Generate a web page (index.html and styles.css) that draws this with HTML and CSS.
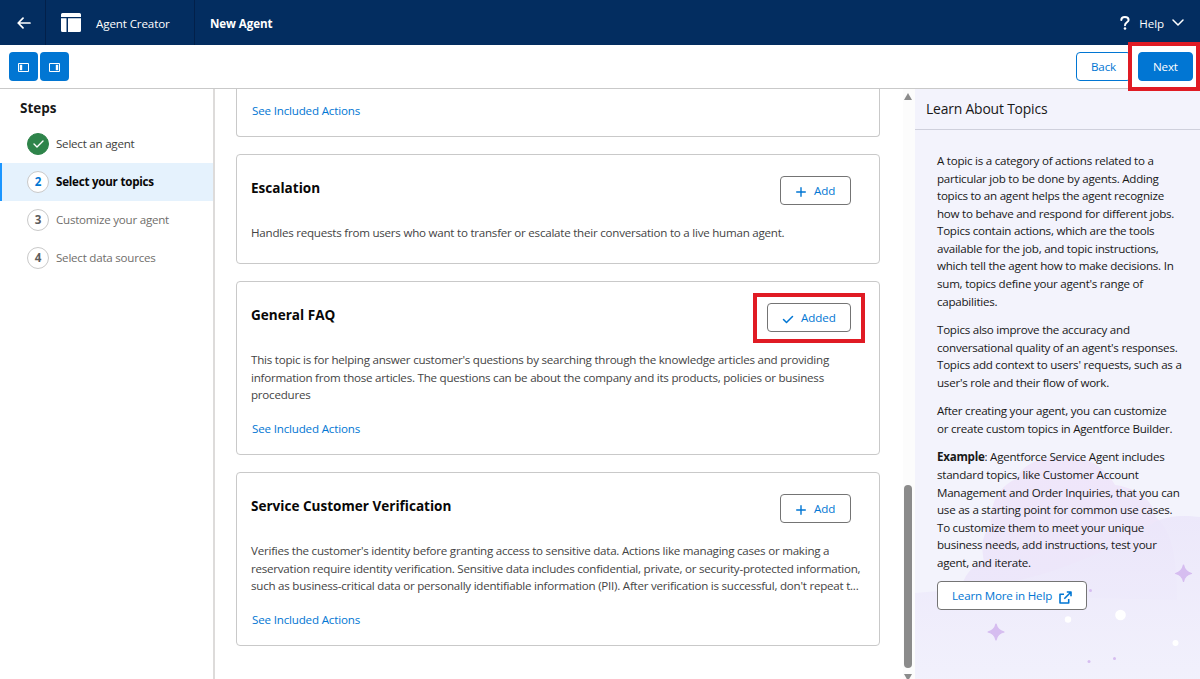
FILE: index.html
```html
<!DOCTYPE html>
<html lang="en">
<head>
    <meta charset="UTF-8">
    <meta name="viewport" content="width=device-width, initial-scale=1.0">
    <title>Agent Creator - New Agent</title>
    <link rel="stylesheet" href="styles.css">
</head>
<body>
    <header class="topbar">
        <a href="#" class="back-arrow">
            <svg width="14" height="12" viewBox="0 0 14 12" fill="none" stroke="#fff" stroke-width="1.7" stroke-linecap="round" stroke-linejoin="round"><path d="M13 6H1.2M6 1.2L1.2 6L6 10.8"/></svg>
        </a>
        <div class="app">
            <svg width="20" height="19" viewBox="0 0 20 19" fill="#fff"><path d="M1.5 0h17A1.5 1.5 0 0 1 20 1.5V4H0V1.5A1.5 1.5 0 0 1 1.5 0zM0 5.3h5.5V19h-4A1.5 1.5 0 0 1 0 17.5zM7 5.3h13v12.2a1.5 1.5 0 0 1-1.5 1.5H7z"/></svg>
            <span class="app-name">Agent Creator</span>
        </div>
        <span class="page-name">New Agent</span>
        <div class="help">
            <svg width="10" height="14" viewBox="0 0 10 14" fill="none"><path d="M1.3 4C1.3 2.1 2.9 1 4.9 1S8.6 2.2 8.6 4C8.6 6.3 5 6.4 5 9.3" stroke="#fff" stroke-width="2" stroke-linecap="round"/><circle cx="5" cy="12.5" r="1.3" fill="#fff"/></svg>
            <span class="help-text">Help</span>
            <svg width="12" height="7" viewBox="0 0 12 7" fill="none" stroke="#fff" stroke-width="1.5" stroke-linecap="round" stroke-linejoin="round"><path d="M1 1l5 5l5-5"/></svg>
        </div>
    </header>

    <div class="toolbar">
        <button class="panel-btn">
            <svg width="11" height="9" viewBox="0 0 11 9"><path d="M.5.5h10v8H.5z" fill="none" stroke="#fff"/><path d="M1.8 1.8h2.4v5.4H1.8z" fill="#fff"/></svg>
        </button>
        <button class="panel-btn">
            <svg width="11" height="9" viewBox="0 0 11 9"><path d="M.5.5h10v8H.5z" fill="none" stroke="#fff"/><path d="M6.8 1.8h2.4v5.4H6.8z" fill="#fff"/></svg>
        </button>
        <div class="nav-buttons">
            <button class="btn back">Back</button>
            <button class="btn next">Next</button>
        </div>
    </div>

    <div class="main">
        <nav class="sidebar">
            <h2>Steps</h2>
            <ul class="steps">
                <li class="step done">
                    <span class="num"><svg width="11" height="8" viewBox="0 0 11 8" fill="none" stroke="#fff" stroke-width="1.4" stroke-linecap="round" stroke-linejoin="round"><path d="M1 4l3 3l6-6"/></svg></span>
                    <span class="label">Select an agent</span>
                </li>
                <li class="step active"><span class="num">2</span><span class="label">Select your topics</span></li>
                <li class="step"><span class="num">3</span><span class="label">Customize your agent</span></li>
                <li class="step"><span class="num">4</span><span class="label">Select data sources</span></li>
            </ul>
        </nav>

        <div class="topics">
            <div class="card card-cut">
                <a href="#" class="actions">See Included Actions</a>
            </div>

            <div class="card">
                <div class="card-head">
                    <h3>Escalation</h3>
                    <button class="btn add"><svg width="10" height="10" viewBox="0 0 10 10" stroke="#0176d3" stroke-width="1.4" stroke-linecap="round"><path d="M5 .7v8.6M.7 5h8.6"/></svg>Add</button>
                </div>
                <p class="desc">Handles requests from users who want to transfer or escalate their conversation to a live human agent.</p>
            </div>

            <div class="card tall">
                <div class="card-head">
                    <h3>General FAQ</h3>
                    <button class="btn add added"><svg width="12" height="9" viewBox="0 0 12 9" fill="none" stroke="#0176d3" stroke-width="1.5" stroke-linecap="round" stroke-linejoin="round"><path d="M1.5 4.5l3 3l6-6"/></svg>Added</button>
                </div>
                <p class="desc">This topic is for helping answer customer's questions by searching through the knowledge articles and providing<br>information from those articles. The questions can be about the company and its products, policies or business<br>procedures</p>
                <a href="#" class="actions">See Included Actions</a>
            </div>

            <div class="card tall">
                <div class="card-head">
                    <h3>Service Customer Verification</h3>
                    <button class="btn add"><svg width="10" height="10" viewBox="0 0 10 10" stroke="#0176d3" stroke-width="1.4" stroke-linecap="round"><path d="M5 .7v8.6M.7 5h8.6"/></svg>Add</button>
                </div>
                <p class="desc">Verifies the customer's identity before granting access to sensitive data. Actions like managing cases or making a<br>reservation require identity verification. Sensitive data includes confidential, private, or security-protected information,<br>such as business-critical data or personally identifiable information (PII). After verification is successful, don't repeat t...</p>
                <a href="#" class="actions">See Included Actions</a>
            </div>
        </div>

        <div class="scrollbar">
            <span class="arrow-up"></span>
            <span class="thumb"></span>
            <span class="arrow-down"></span>
        </div>

        <aside class="learn">
            <svg class="scene" width="285" height="229" viewBox="0 0 285 229">
                <defs>
                    <linearGradient id="hill" x1="0" y1="0" x2="0" y2="1">
                        <stop offset="0" stop-color="#ebe6fa"/>
                        <stop offset="1" stop-color="#f1f0fc"/>
                    </linearGradient>
                    <linearGradient id="bush" x1="0" y1="0" x2="0" y2="1">
                        <stop offset="0" stop-color="#f0e6fa"/>
                        <stop offset="1" stop-color="#ece7fa"/>
                    </linearGradient>
                </defs>
                <path d="M46 145C46 128 56 116 69 112C66 96 67 84 76 76C74 54 84 36 101 29C111 9 136 4 158 8C180 9 193 22 200 35C222 38 238 50 240 66C255 80 262 100 262 150z" fill="url(#bush)"/>
                <path d="M0 143C20 141 40 140 60 138C120 132 190 105 238 73C252 65 270 65 285 67V229H0z" fill="url(#hill)" opacity=".85"/>
                <path d="M81 174Q82.5 180.5 89 182Q82.5 183.5 81 190Q79.5 183.5 73 182Q79.5 180.5 81 174zM268.5 115Q270 122 276.5 123.5Q270 125 268.5 131.5Q267 125 260.5 123.5Q267 122 268.5 115z" fill="#d6bdf0" stroke="#d6bdf0" stroke-width="1.2" stroke-linejoin="round"/>
                <circle cx="205.5" cy="165" r="5.3" fill="#fff"/>
                <circle cx="153" cy="169.5" r="3.2" fill="#fff"/>
                <circle cx="260.5" cy="193" r="3" fill="#fff"/>
                <circle cx="175.5" cy="140.5" r="1.5" fill="#d6bdf0"/>
                <circle cx="199.5" cy="208.5" r="1.5" fill="#d6bdf0"/>
                <circle cx="174" cy="211.5" r="1.5" fill="#d6bdf0"/>
            </svg>
            <h2 class="learn-title">Learn About Topics</h2>
            <div class="learn-body">
                <p>A topic is a category of actions related to a<br>particular job to be done by agents. Adding<br>topics to an agent helps the agent recognize<br>how to behave and respond for different jobs.<br>Topics contain actions, which are the tools<br>available for the job, and topic instructions,<br>which tell the agent how to make decisions. In<br>sum, topics define your agent's range of<br>capabilities.</p>
                <p>Topics also improve the accuracy and<br>conversational quality of an agent's responses.<br>Topics add context to users' requests, such as a<br>user's role and their flow of work.</p>
                <p>After creating your agent, you can customize<br>or create custom topics in Agentforce Builder.</p>
                <p><b>Example</b>: Agentforce Service Agent includes<br>standard topics, like Customer Account<br>Management and Order Inquiries, that you can<br>use as a starting point for common use cases.<br>To customize them to meet your unique<br>business needs, add instructions, test your<br>agent, and iterate.</p>
                <button class="btn more">Learn More in Help<svg width="13" height="13" viewBox="0 0 13 13" fill="none" stroke="#0176d3" stroke-width="1.6" stroke-linejoin="round"><path d="M5 3.3H1V12h8.7V8M7.8 1H12v4.2M12 1L5.3 7.7"/></svg></button>
            </div>
        </aside>
    </div>

    <div class="highlight highlight-next"></div>
    <div class="highlight highlight-added"></div>
</body>
</html>
```
FILE: styles.css
```css
* {
    box-sizing: border-box;
}

body {
    margin: 0;
    height: 679px;
    overflow: hidden;
    display: flex;
    flex-direction: column;
    position: relative;
    background-color: #fff;
    color: #181818;
    font-family: "Open Sans", "Noto Sans", sans-serif;
    font-size: 11.6px;
    line-height: 17.57px;
}

h2, h3, p, ul {
    margin: 0;
    padding: 0;
}

svg {
    display: block;
    flex-shrink: 0;
}

a {
    color: #0176d3;
    text-decoration: none;
}

/* top bar */
.topbar {
    display: flex;
    align-items: center;
    height: 45px;
    flex-shrink: 0;
    background-color: #032d60;
    color: #fff;
    white-space: nowrap;
}

.back-arrow {
    display: flex;
    align-items: center;
    width: 46px;
    height: 45px;
    padding-left: 17px;
    border-right: 1px solid #02204a;
}

.app {
    display: flex;
    align-items: center;
    gap: 15px;
    width: 149px;
    height: 45px;
    padding-left: 15px;
    border-right: 1px solid #02204a;
}

.app-name,
.page-name,
.help-text {
    padding-top: 2px;
}

.app-name {
    letter-spacing: -0.12px;
}

.page-name {
    margin-left: 15px;
    font-weight: bold;
    letter-spacing: -0.1px;
}

.help {
    display: flex;
    align-items: center;
    margin-left: auto;
    padding-right: 16px;
}

.help-text {
    margin: 0 8px 0 9px;
    letter-spacing: -0.1px;
}

/* toolbar */
.toolbar {
    display: flex;
    align-items: center;
    gap: 2px;
    height: 44px;
    flex-shrink: 0;
    padding: 0 7px 0 9px;
    border-bottom: 1px solid #c9c9c9;
}

.panel-btn {
    display: flex;
    align-items: center;
    justify-content: center;
    width: 29px;
    height: 29px;
    padding: 2px 0 0;
    border: none;
    border-radius: 4px;
    background-color: #0176d3;
}

.btn {
    display: flex;
    align-items: center;
    height: 29px;
    padding: 0 14px;
    border: 1px solid #747474;
    border-radius: 4px;
    background-color: #fff;
    color: #0176d3;
    font: inherit;
    white-space: nowrap;
}

.nav-buttons {
    display: flex;
    gap: 7px;
    margin-left: auto;
}

.back {
    width: 55px;
    border-color: #0176d3;
    letter-spacing: -0.15px;
}

.next {
    width: 55px;
    border-color: #0176d3;
    background-color: #0176d3;
    color: #fff;
    letter-spacing: -0.15px;
}

/* columns */
.main {
    display: flex;
    flex: 1;
    min-height: 0;
}

.sidebar {
    width: 215px;
    flex-shrink: 0;
    border-right: 2px solid #dddbda;
}

.sidebar h2 {
    padding: 10px 0 0 20px;
    font-size: 13.5px;
    line-height: 18px;
}

.steps {
    padding-top: 8px;
    list-style: none;
}

.step {
    display: flex;
    align-items: center;
    gap: 7px;
    height: 38px;
    padding-left: 27px;
    color: #706e6b;
    white-space: nowrap;
    letter-spacing: -0.24px;
}

.num {
    display: flex;
    align-items: center;
    justify-content: center;
    width: 22px;
    height: 22px;
    border: 1px solid #c9c9c9;
    border-radius: 50%;
    background-color: #fff;
    color: #5c5c5c;
    font-weight: bold;
}

.done {
    color: #3e3e3c;
}

.done .num {
    border-color: #2e844a;
    background-color: #2e844a;
}

.active {
    padding-left: 25px;
    border-left: 2px solid #1b96ff;
    background-color: #e5f2fd;
    color: #080707;
    font-weight: bold;
}

.active .num {
    color: #0176d3;
}

.topics {
    display: flex;
    flex-direction: column;
    gap: 17px;
    flex: 1;
    padding-left: 21px;
    overflow: hidden;
}

.card {
    width: 644px;
    height: 110px;
    flex-shrink: 0;
    padding: 21px 14px 0;
    border: 1px solid #c9c9c9;
    border-radius: 4px;
}

.tall {
    height: 174px;
}

.card-cut {
    height: 48px;
    padding-top: 13px;
    border-top: none;
    border-radius: 0 0 4px 4px;
}

.card-head {
    display: flex;
    align-items: flex-start;
    justify-content: space-between;
    padding-right: 14px;
}

.card h3 {
    padding-top: 3px;
    color: #080707;
    font-size: 13.55px;
    line-height: 18px;
}

.add {
    width: 71px;
    padding-left: 15px;
    letter-spacing: -0.1px;
}

.add svg {
    margin: 3px 8px 0 0;
}

.added {
    width: 84px;
    padding-left: 14px;
}

.added svg {
    margin-right: 7px;
}

.desc {
    padding-top: 19px;
    color: #444;
    white-space: nowrap;
    letter-spacing: -0.24px;
}

.actions {
    display: block;
    margin: 16px 0 0 1px;
    letter-spacing: -0.18px;
}

.card-cut .actions {
    margin-top: 0;
}

/* scrollbar */
.scrollbar {
    display: flex;
    flex-direction: column;
    align-items: center;
    width: 12px;
    padding: 4px 2px 0 0;
    background-color: #fcfcfc;
}

.arrow-up,
.arrow-down {
    border: 4px solid transparent;
}

.arrow-up {
    border-top: none;
    border-bottom: 7px solid #8b8b8b;
}

.arrow-down {
    margin-top: 6px;
    border-bottom: none;
    border-top: 7px solid #8b8b8b;
}

.thumb {
    width: 8px;
    height: 183px;
    flex-shrink: 0;
    margin-top: 385px;
    border-radius: 4px;
    background-color: #8b8b8b;
}

/* help panel */
.learn {
    width: 285px;
    flex-shrink: 0;
    position: relative;
    overflow: hidden;
    background-color: #f3f3fc;
}

.scene {
    position: absolute;
    left: 0;
    bottom: 0;
}

.learn-title {
    height: 41px;
    padding: 10px 0 0 11px;
    border-bottom: 1px solid #cfd0dc;
    font-size: 13.9px;
    font-weight: normal;
    line-height: 20px;
    letter-spacing: -0.18px;
}

.learn-body {
    position: relative;
    padding: 22px 0 0 22px;
    white-space: nowrap;
    letter-spacing: -0.25px;
}

.learn-body p {
    margin-bottom: 11px;
}

.learn-body p:last-of-type {
    margin-bottom: 10px;
}

.more {
    gap: 7px;
    width: 150px;
    letter-spacing: -0.2px;
}

.more svg {
    margin-top: 3px;
}

/* red boxes drawn over the page */
.highlight {
    position: absolute;
    border: 4px solid #e01b24;
}

.highlight-next {
    left: 1128px;
    top: 42px;
    width: 72px;
    height: 49px;
}

.highlight-added {
    left: 753px;
    top: 293px;
    width: 112px;
    height: 50px;
}
```
